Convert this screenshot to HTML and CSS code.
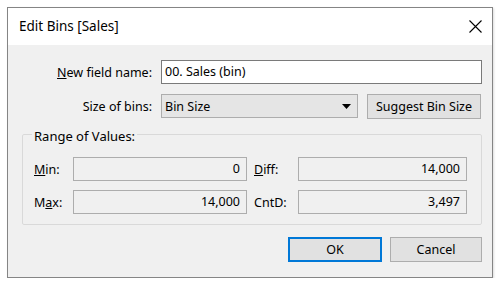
FILE: index.html
```html
<!DOCTYPE html>
<html lang="en">

<head>
    <meta charset="UTF-8">
    <meta name="viewport" content="width=device-width, initial-scale=1.0">
    <title>Edit Bins [Sales]</title>
    <link rel="stylesheet" href="styles.css">
</head>

<body>
    <div class="dialog">
        <div class="titlebar">
            <span class="title">Edit Bins [Sales]</span>
            <svg class="close" width="13" height="13" viewBox="0 0 13 13">
                <path d="M0.5 0.5 L12.5 12.5 M12.5 0.5 L0.5 12.5" stroke="#000" stroke-width="1.1" fill="none" />
            </svg>
        </div>

        <div class="content">
            <div class="row">
                <label class="label"><u>N</u>ew field name:</label>
                <div class="textbox">00. Sales (bin)</div>
            </div>
            <div class="row">
                <label class="label">Size of bins:</label>
                <div class="select">
                    <span>Bin Size</span>
                    <svg width="9" height="5" viewBox="0 0 9 5">
                        <path d="M0 0 H9 L4.5 5 Z" fill="#000" />
                    </svg>
                </div>
                <div class="button suggest">Suggest Bin Size</div>
            </div>

            <fieldset class="group">
                <legend>Range of Values:</legend>
                <div class="values">
                    <span class="vlabel"><u>M</u>in:</span>
                    <div class="field">0</div>
                    <span class="vlabel right"><u>D</u>iff:</span>
                    <div class="field">14,000</div>

                    <span class="vlabel">M<u>a</u>x:</span>
                    <div class="field">14,000</div>
                    <span class="vlabel right">CntD:</span>
                    <div class="field">3,497</div>
                </div>
            </fieldset>

            <div class="actions">
                <div class="button default">OK</div>
                <div class="button">Cancel</div>
            </div>
        </div>
    </div>
</body>

</html>
```

FILE: styles.css
```css
body {
    margin: 0;
    background: #fff;
    font-family: 'Noto Sans', 'Open Sans', sans-serif;
    font-size: 12.5px;
    color: #000;
}

.dialog {
    margin: 7px 0 0 7px;
    width: 484px;
    height: 269px;
    border: 1px solid #858585;
    background: #f0f0f0;
    box-shadow: 1px 1px 2px #0002;
}

.titlebar {
    height: 37px;
    background: #fff;
    display: flex;
    align-items: center;
    justify-content: space-between;
    padding: 0 10px 0 11px;
}

.title {
    font-size: 13.5px;
    padding-bottom: 2px;
}

.close {
    margin-bottom: 1px;
}

.content {
    padding: 15px 10px 0 14px;
    display: flex;
    flex-direction: column;
}

.row {
    display: flex;
    align-items: center;
    height: 24px;
    margin-bottom: 10px;
}

.row + .row {
    margin-bottom: 0;
}

.label {
    width: 130px;
    text-align: right;
    margin-right: 9px;
}

.textbox {
    flex: 1;
    height: 22px;
    line-height: 22px;
    border: 1px solid #7a7a7a;
    background: #fff;
    padding-left: 3px;
}

.select {
    height: 22px;
    border: 1px solid #adadad;
    background: #e5e5e5;
    display: flex;
    align-items: center;
    justify-content: space-between;
    padding: 0 6px 0 3px;
    width: 186px;
}

.button {
    height: 23px;
    border: 1px solid #adadad;
    background: #e1e1e1;
    display: flex;
    align-items: center;
    justify-content: center;
}

.suggest {
    margin-left: 9px;
    width: 112px;
}

.group {
    margin: 6px 0 0 0;
    padding: 0 14px 10px 11px;
    border: 1px solid #d9d9d9;
    border-radius: 2px;
}

.group legend {
    padding: 4px 2px 0 2px;
    margin-left: -2px;
    line-height: 16px;
    font-size: 13px;
}

.values {
    margin-top: 13px;
    display: grid;
    grid-template-columns: 39px 174px 51px 1fr;
    row-gap: 9px;
    align-items: center;
}

.vlabel.right {
    padding-left: 7px;
}

.field {
    height: 22px;
    line-height: 22px;
    border: 1px solid #adadad;
    background: #f0f0f0;
    text-align: right;
    padding-right: 6px;
}

.actions {
    display: flex;
    justify-content: flex-end;
    gap: 8px;
    margin-top: 12px;
}

.actions .button {
    width: 90px;
    height: 23px;
}

.actions .default {
    border: 2px solid #0078d7;
    height: 21px;
}
```
